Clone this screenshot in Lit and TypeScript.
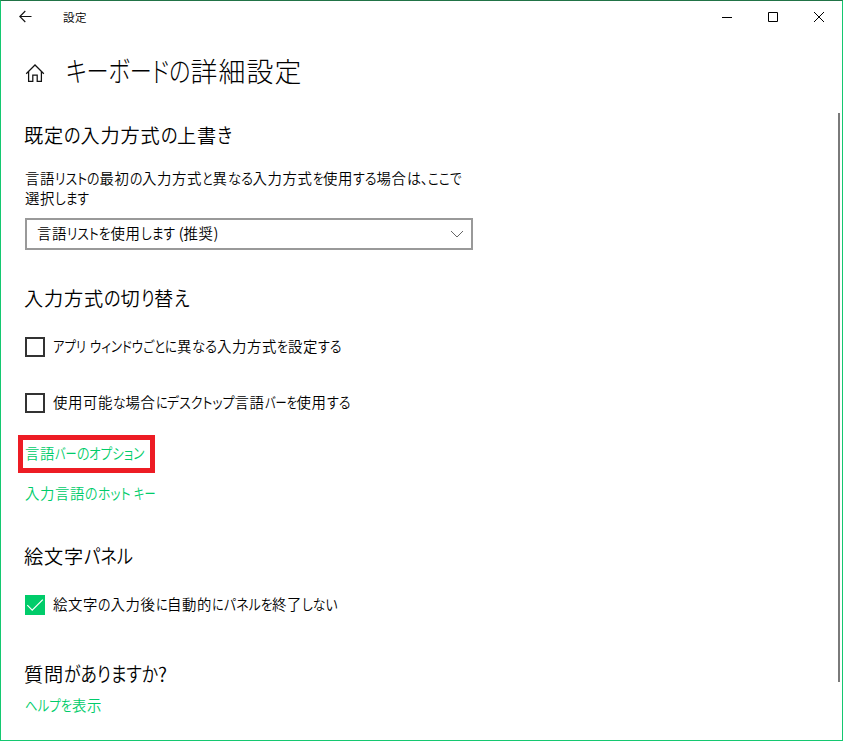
import { LitElement, html, css, svg } from "lit";
import { customElement, property } from "lit/decorators.js";

/** A piece of text and the advance width, in pixels, that it is set to. */
type Run = [string, number];

@customElement("ui-text")
class UiText extends LitElement {
  @property({ attribute: false }) runs: Run[] = [];

  static styles = css`
    :host { display: flex; white-space: pre; }
    .run { flex: none; }
    .glyphs { display: inline-block; transform-origin: 0 50%; font-feature-settings: "palt" 1; }
    .full { font-feature-settings: normal; font-size: 0.96em; letter-spacing: 0.0416em; }
  `;

  updated() {
    this.renderRoot.querySelectorAll<HTMLElement>(".glyphs").forEach((el, i) => {
      el.style.transform = "none";
      const natural = el.getBoundingClientRect().width;
      const ratio = this.runs[i][1] / natural;
      el.style.transform = Math.abs(ratio - 1) < 0.012 ? "none" : `scaleX(${ratio})`;
    });
  }

  render() {
    return html`${this.runs.map(([text, width]) => html`<span class="run" style="width:${width}px"><span class="glyphs ${/^[\u4e00-\u9fff]+$/.test(text) ? "full" : ""}">${text}</span></span>`)}`;
  }
}

@customElement("check-row")
class CheckRow extends LitElement {
  @property({ type: Boolean }) checked = false;
  @property({ attribute: false }) runs: Run[] = [];

  static styles = css`
    :host { display: flex; align-items: center; gap: 8px; height: 20px; }
    .box { box-sizing: border-box; width: 20px; height: 20px; border: 2px solid #333; flex: none; }
    .on { border: 0; background: #00cc6a; }
    svg { display: block; }
    ui-text { margin-bottom: 2px; }
  `;

  render() {
    return html`
      <span class="box ${this.checked ? "on" : ""}">
        ${this.checked ? html`<svg width="20" height="20" viewBox="0 0 20 20" fill="none" stroke="#fff" stroke-width="1.2">${svg`<path d="M2.3 10.2 7.2 15.1 17.8 4.6"/>`}</svg>` : ""}
      </span>
      <ui-text .runs=${this.runs}></ui-text>`;
  }
}

@customElement("app-root")
class AppRoot extends LitElement {
  static styles = css`
    :host {
      display: flex; flex-direction: column; box-sizing: border-box; height: 741px;
      background: #fff; color: #000; overflow: hidden;
      border: 1px solid #14c870; border-top-color: #217346;
      font-family: "Noto Sans CJK JP", sans-serif; font-size: 15px; line-height: 20px;
      font-weight: 350;
    }
    svg { display: block; flex: none; }
    .titlebar { display: flex; height: 32px; align-items: center; flex: none; }
    .back { width: 62px; padding-left: 18px; box-sizing: border-box; }
    .caption { font-size: 12px; flex: 1; }
    .buttons { display: flex; }
    .button { width: 46px; height: 32px; }
    .heading { display: flex; align-items: center; height: 40px; margin-top: 19px; padding-left: 24px; flex: none; }
    .home { margin-top: 2px; }
    .title { font-size: 28px; line-height: 38px; font-weight: 300; margin: 0 0 3px 21px; }
    .body { display: flex; flex: 1; min-height: 0; margin-top: 20px; }
    .content { flex: 1; padding-left: 24px; }
    .scrollbar { width: 2px; height: 569px; margin: 1px 2px 0 0; background: #7a7a7a; }
    .h2 { font-size: 20px; line-height: 28px; margin-left: -1px; }
    .first { margin-top: 9px; }
    .note { margin-top: 19px; }
    .select {
      box-sizing: border-box; display: flex; align-items: center; justify-content: space-between;
      width: 448px; height: 32px; margin-top: 10px; padding: 0 7px 0 10px; border: 2px solid #999;
    }
    .value { margin-bottom: 2px; }
    .link { color: #00cc6a; }
    .framed {
      box-sizing: border-box; width: 137px; height: 38px; margin: 22px 0 0 -7px;
      padding: 3px 2px; border: 5px solid #ed1c24;
    }
    .gap-section { margin-top: 34px; }
    .gap-check { margin-top: 25px; }
    .gap-checks { margin-top: 36px; }
    .gap-link { margin-top: 10px; }
    .gap-emoji { margin-top: 39px; }
    .gap-help { margin-top: 45px; }
    .help { margin-top: 7px; }
  `;

  render() {
    return html`
      <div class="titlebar">
        <div class="back">
          <svg width="14" height="14" viewBox="0 0 14 14" fill="none" stroke="#111" stroke-width="1.1"><path d="M12.5 6.5H1M6.3 1 .8 6.5l5.5 5.5"/></svg>
        </div>
        <ui-text class="caption" .runs=${[["設定", 24]] as Run[]}></ui-text>
        <div class="buttons">
          <svg class="button" viewBox="0 0 46 32" stroke="#000"><path d="M18 16.5h10"/></svg>
          <svg class="button" viewBox="0 0 46 32" fill="none" stroke="#000"><path d="M18.5 11.5h9v9h-9z"/></svg>
          <svg class="button" viewBox="0 0 46 32" stroke="#000"><path d="M18 11 28 21M28 11 18 21"/></svg>
        </div>
      </div>
      <div class="heading">
        <svg class="home" width="20" height="20" viewBox="0 0 20 20" fill="none" stroke="#111" stroke-width="1.25"><path d="M1.2 10.7 10 2l8.800 8.700M3.600 8.500v9.800h4.200v-6.200h4.400v6.200h4.200V8.500"/></svg>
        <ui-text class="title" .runs=${[["キーボードの", 124.5], ["詳細設定", 112]] as Run[]}></ui-text>
      </div>
      <div class="body">
        <div class="content">
          <ui-text class="h2 first" .runs=${[["既定", 40], ["の", 16.5], ["入力方式", 80], ["の", 16.5], ["上書", 40], ["き", 15]] as Run[]}></ui-text>
          <ui-text class="note" .runs=${[["言語", 30], ["リスト", 32], ["の", 12.5], ["最初", 30], ["の", 12.5], ["入力方式", 60], ["と", 10.5], ["異", 15], ["なる", 25], ["入力方式", 60], ["を", 10.5], ["使用", 30], ["する", 23.5], ["場合", 30], ["は、", 21], ["ここで", 33.5]] as Run[]}></ui-text>
          <ui-text .runs=${[["選択", 30], ["します", 34]] as Run[]}></ui-text>
          <div class="select">
            <ui-text class="value" .runs=${[["言語", 30], ["リストを", 43.5], ["使用", 30], ["します", 34], [" (", 9], ["推奨", 30], [")", 5]] as Run[]}></ui-text>
            <svg width="14" height="8" viewBox="0 0 14 8" fill="none" stroke="#666" stroke-width="1"><path d="M1 1l6 6 6-6"/></svg>
          </div>
          <ui-text class="h2 gap-section" .runs=${[["入力方式", 80], ["の", 16.5], ["切", 20], ["り", 13.5], ["替", 20], ["え", 15.5]] as Run[]}></ui-text>
          <check-row class="gap-check" .runs=${[["アプリ", 33], [" ", 4], ["ウィンドウごとに", 87], ["異", 15], ["なる", 25], ["入力方式", 60], ["を", 11], ["設定", 30], ["する", 23.5]] as Run[]}></check-row>
          <check-row class="gap-checks" .runs=${[["使用可能", 60], ["な", 12.5], ["場合", 30], ["に", 11.5], ["デスクトップ", 67.5], ["言語", 30], ["バーを", 32], ["使用", 30], ["する", 23.5]] as Run[]}></check-row>
          <div class="framed"><ui-text class="link" .runs=${[["言語", 30], ["バー", 21.5], ["の", 12.5], ["オプション", 55.5]] as Run[]}></ui-text></div>
          <ui-text class="link gap-link" .runs=${[["入力言語", 60], ["の", 12.5], ["ホット", 32.5], [" ", 4], ["キー", 21.5]] as Run[]}></ui-text>
          <ui-text class="h2 gap-emoji" .runs=${[["絵文字", 60], ["パネル", 49]] as Run[]}></ui-text>
          <check-row class="gap-check" checked .runs=${[["絵文字", 45], ["の", 12.5], ["入力後", 45], ["に", 11.5], ["自動的", 45], ["に", 11.5], ["パネルを", 48.500], ["終了", 30], ["しない", 35.5]] as Run[]}></check-row>
          <ui-text class="h2 gap-help" .runs=${[["質問", 40], ["がありますか", 94], ["?", 9]] as Run[]}></ui-text>
          <ui-text class="link help" .runs=${[["ヘルプを", 47], ["表示", 30]] as Run[]}></ui-text>
        </div>
        <div class="scrollbar"></div>
      </div>`;
  }
}
